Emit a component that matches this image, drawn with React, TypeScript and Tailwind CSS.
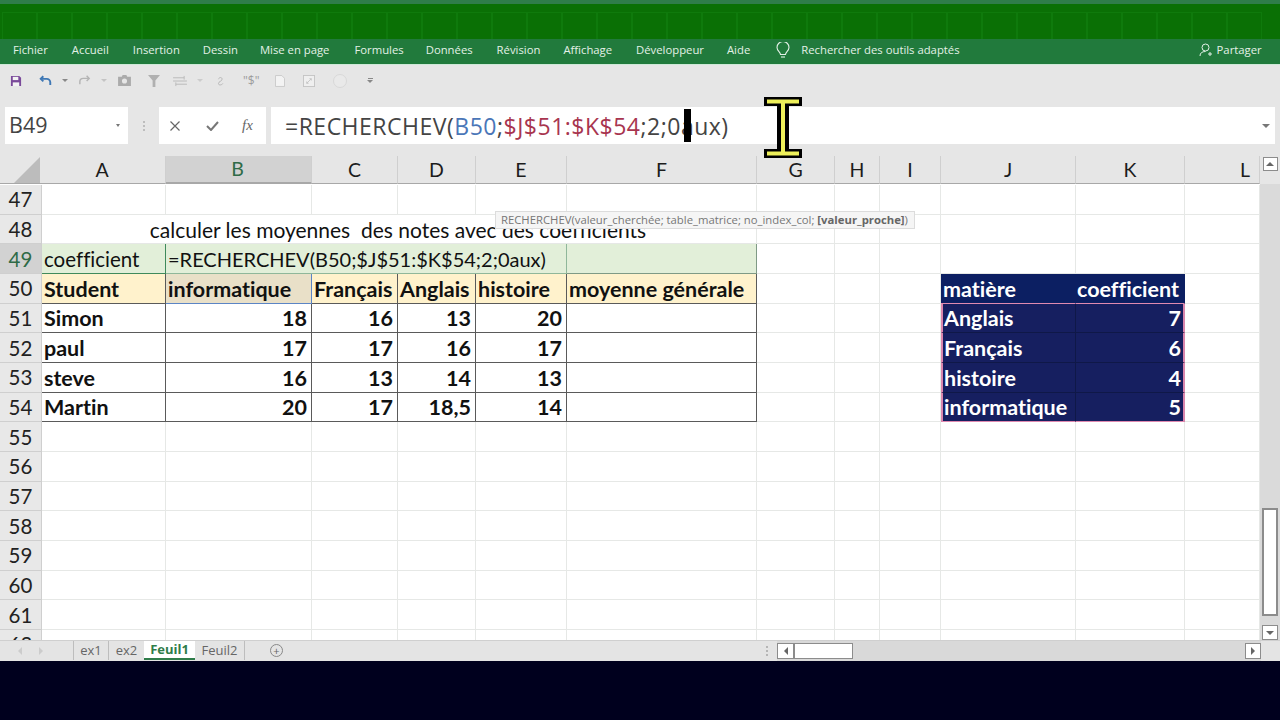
import React from "react";

const COLS = ["A", "B", "C", "D", "E", "F", "G", "H", "I", "J", "K", "L"];
const TABS = ["Fichier", "Accueil", "Insertion", "Dessin", "Mise en page", "Formules", "Données", "Révision", "Affichage", "Développeur", "Aide"];
const TAB_CLASS = ["ml-[13px]", "ml-[24px]", "ml-[24px]", "ml-[23px]", "ml-[22px]", "ml-[25px]", "ml-[22px]", "ml-[24px]", "ml-[23px]", "ml-[24px]", "ml-[23px]"];
const HEAD_CLASS = ["w-[124px] pr-[3px]", "w-[146px] pr-[2px]", "w-[86px]", "w-[78px]", "w-[91px]", "w-[190px]", "w-[78px]", "w-[45px]", "w-[61px]", "w-[135px]", "w-[109px]", "w-[75px] !justify-end pr-[9px]"];

const sans = "font-['Open_Sans',sans-serif]";
const cal = "font-['Lato',sans-serif] [font-variant-ligatures:none]";

function RowHead({ n, active }: { n: number; active?: boolean }) {
  return (
    <div className={`flex items-center justify-center border-r border-b border-[#cfcfcf] pt-[1px] text-[20.5px] ${cal} ${active ? "bg-[#d2d2d2] text-[#2f6b47]" : "bg-[#e8e8e8] text-[#222]"}`}>
      {n}
    </div>
  );
}

function Cell({ className = "", children }: { className?: string; children?: React.ReactNode }) {
  return <div className={`flex items-center overflow-hidden whitespace-nowrap border-r border-b pl-[2px] pr-[4px] pt-[1px] ${className}`}>{children}</div>;
}

const GRID = "border-[#e6e8e6]";
const DARK = "border-[#5a5a5a] font-bold text-[#111] text-[21.5px]";
const NAVY = "bg-[#161f60] border-[#0f1848] text-white font-bold text-[21.5px]";
const NAVYH = "bg-[#0c1f62] border-[#0c1f62] text-white font-bold text-[21.5px]";

function Empty({ count }: { count: number }) {
  return (
    <>
      {Array.from({ length: count }, (_, i) => (
        <Cell key={i} className={GRID} />
      ))}
    </>
  );
}

function Caret({ className = "" }: { className?: string }) {
  return <span className={`h-0 w-0 shrink-0 border-x-[3px] border-t-[3px] border-x-transparent ${className}`} />;
}

function Qat() {
  return (
    <div className="flex h-[42px] items-center pb-[11px] pl-0">
      <svg width="12" height="12" viewBox="0 0 13 13" className="ml-[10px] shrink-0">
        <path d="M1 1h9l2 2v9H1z" fill="#7a4a9a" />
        <rect x="3" y="2" width="6" height="3.500" fill="#f2f2f2" />
        <rect x="3" y="8" width="7" height="4" fill="#f2f2f2" />
      </svg>
      <svg width="13" height="12" viewBox="0 0 15 13" className="ml-[17px] shrink-0" fill="none" stroke="#3f78b5" strokeWidth="2.200">
        <path d="M5 1 2 4l3 3" />
        <path d="M2 4h7a4 4 0 0 1 4 4v3" />
      </svg>
      <Caret className="ml-[10px] border-t-[#888]" />
      <svg width="13" height="11" viewBox="0 0 15 13" className="ml-[10px] shrink-0" fill="none" stroke="#b4b4b4" strokeWidth="1.700">
        <path d="m10 1 3 3-3 3" />
        <path d="M13 4H6a4 4 0 0 0-4 4v3" />
      </svg>
      <Caret className="ml-[10px] border-t-[#c4c4c4]" />
      <svg width="13" height="11" viewBox="0 0 14 12" className="ml-[11px] shrink-0">
        <path d="M0 2h4l1-2h4l1 2h4v10H0z" fill="#ababab" />
        <circle cx="7" cy="6.500" r="2.800" fill="#e6e6e6" />
      </svg>
      <svg width="12" height="12" viewBox="0 0 13 13" className="ml-[17px] shrink-0">
        <path d="M0 0h13L8 6v7H5V6z" fill="#b0b0b0" />
      </svg>
      <svg width="14" height="12" viewBox="0 0 15 13" className="ml-[13px] shrink-0" fill="none" stroke="#b9b9b9" strokeWidth="1">
        <path d="M0 3h12M0 6.500h15M3 10h12M12 1v4M3 8v4" />
      </svg>
      <Caret className="ml-[10px] border-t-[#cccccc]" />
      <svg width="8" height="12" viewBox="0 0 11 13" className="ml-[14px] shrink-0" fill="none" stroke="#b4b4b4" strokeWidth="1.300">
        <path d="M2 4c1-3 5-3 5 0s-5 3-5 6 5 2 6 0" />
      </svg>
      <span className={`ml-[18px] w-[14px] shrink-0 text-[12px] leading-none text-[#9c9c9c] ${sans}`}>"$"</span>
      <svg width="10" height="12" viewBox="0 0 11 13" className="ml-[18px] shrink-0" fill="#f3f3f3" stroke="#c8c8c8">
        <path d="M.5.500h7l3 3v9H.5z" />
      </svg>
      <svg width="12" height="12" viewBox="0 0 13 13" className="ml-[18px] shrink-0" fill="#efefef" stroke="#c4c4c4">
        <rect x=".5" y=".5" width="12" height="12" />
        <path d="M4 9l5-5M6 9H4V7M7 4h2v2" fill="none" />
      </svg>
      <span className="ml-[18px] h-[14px] w-[14px] shrink-0 rounded-full border border-[#d8d8d8] bg-[#e9e9e9]" />
      <span className="ml-[20px] flex shrink-0 flex-col items-center gap-[1px]">
        <span className="h-[1px] w-[5px] bg-[#888]" />
        <span className="h-0 w-0 border-x-[3px] border-t-[3px] border-x-transparent border-t-[#888]" />
      </span>
    </div>
  );
}

function FormulaBar() {
  return (
    <div className="flex h-[37px] items-stretch pl-[5px]">
      <div className={`flex w-[123px] items-center justify-between bg-white pl-[4px] pr-[8px] text-[21.5px] text-[#444] ${sans}`}>
        <span>B49</span>
        <span className="h-0 w-0 border-x-[2px] border-t-[3px] border-x-transparent border-t-[#777]" />
      </div>
      <div className="flex w-[31px] flex-col items-center justify-center gap-[2px]">
        <span className="h-[2px] w-[2px] bg-[#bdbdbd]" />
        <span className="h-[2px] w-[2px] bg-[#bdbdbd]" />
        <span className="h-[2px] w-[2px] bg-[#bdbdbd]" />
      </div>
      <div className="flex w-[107px] items-center bg-white pl-[11px]">
        <svg width="10" height="10" viewBox="0 0 10 10" stroke="#666" strokeWidth="1.200">
          <path d="M.5.500l9 9M9.500.500l-9 9" />
        </svg>
        <svg width="13" height="10" viewBox="0 0 13 10" className="ml-[26px]" fill="none" stroke="#777" strokeWidth="2">
          <path d="m1 5 4 4 7-8" />
        </svg>
        <span className="ml-[23px] font-['Liberation_Serif',serif] text-[15px] italic text-[#666]">fx</span>
      </div>
      <div className={`ml-[5px] flex w-[1004px] items-center justify-between bg-white pl-[14px] pr-[5px] pt-[1px] text-[23px] tracking-[0.5px] text-[#444] ${sans}`}>
        <span className="whitespace-nowrap">
          =RECHERCHEV(<span className="text-[#4a76b8]">B50</span>;<span className="text-[#a8354f]">$J$51:$K$54</span>;2;0
          <span className="relative">
            a
            <span className="absolute left-[3px] top-[-1px] h-[33px] w-[7px] bg-black" />
          </span>
          ux)
        </span>
        <span className="h-0 w-0 border-x-[4px] border-t-[4px] border-x-transparent border-t-[#777]" />
      </div>
    </div>
  );
}

function ColHeaders() {
  return (
    <div className="flex h-[28px] items-stretch">
      <div className="flex w-[42px] items-end justify-end border-b border-[#a8a8a8] bg-[#e6e6e6] pr-[2px] pb-[0px]">
        <span className="h-0 w-0 border-b-[26px] border-l-[26px] border-b-[#bcbcbc] border-l-transparent" />
      </div>
      {COLS.map((c, i) => (
        <div
          key={c}
          className={`${HEAD_CLASS[i]} flex items-center justify-center border-b border-r border-[#cfcfcf] border-b-[#a8a8a8] text-[19.5px] ${cal} ${c === "B" ? "border-b-2 border-b-[#2f7d4a] bg-[#d2d2d2] text-[#2f6b47]" : "bg-[#e6e6e6] text-[#1c1c1c]"}`}
        >
          {c}
        </div>
      ))}
    </div>
  );
}

function Sheet() {
  const students: [string, string, string, string, string, string, string][] = [
    ["51", "Simon", "18", "16", "13", "20", "Anglais|7"],
    ["52", "paul", "17", "17", "16", "17", "Français|6"],
    ["53", "steve", "16", "13", "14", "13", "histoire|4"],
    ["54", "Martin", "20", "17", "18,5", "14", "informatique|5"],
  ];
  return (
    <div className={`grid h-[456px] w-[1260px] grid-cols-[42px_124px_146px_86px_78px_91px_190px_78px_45px_61px_135px_109px_75px] auto-rows-[29.67px] overflow-hidden bg-white pt-[1px] ${cal} text-[20.5px] text-[#111]`}>
      <RowHead n={47} />
      <Empty count={12} />

      <RowHead n={48} />
      <Cell className={`col-span-6 justify-center text-[21px] ${GRID}`}>calculer les moyennes&nbsp; des notes avec des coefficients</Cell>
      <Empty count={6} />

      <RowHead n={49} active />
      <Cell className="border-[#3f8a5b] bg-[#e2efd9]">coefficient</Cell>
      <Cell className="col-span-4 border-[#8fb79a] bg-[#e2efd9] text-[20px]">=RECHERCHEV(B50;$J$51:$K$54;2;0aux)</Cell>
      <Cell className="border-[#7f9a86] bg-[#e2efd9]" />
      <Empty count={6} />

      <RowHead n={50} />
      <Cell className={`${DARK} bg-[#fff2cc]`}>Student</Cell>
      <Cell className={`${DARK} border-[#5b85c5] bg-[#e9e0c8]`}>informatique</Cell>
      <Cell className={`${DARK} bg-[#fff2cc]`}>Français</Cell>
      <Cell className={`${DARK} bg-[#fff2cc]`}>Anglais</Cell>
      <Cell className={`${DARK} bg-[#fff2cc]`}>histoire</Cell>
      <Cell className={`${DARK} bg-[#fff2cc]`}>moyenne générale</Cell>
      <Empty count={2} />
      <Cell className={GRID} />
      <Cell className={`${NAVYH} border-b-[#e08ab0]`}>matière</Cell>
      <Cell className={`${NAVYH} justify-end border-b-[#e08ab0] !pr-[5px]`}>coefficient</Cell>
      <Cell className={GRID} />

      {students.map((s) => {
        const [name, coef] = s[6].split("|");
        const last = s[0] === "54";
        return (
          <React.Fragment key={s[0]}>
            <RowHead n={Number(s[0])} />
            <Cell className={DARK}>{s[1]}</Cell>
            <Cell className={`${DARK} justify-end`}>{s[2]}</Cell>
            <Cell className={`${DARK} justify-end`}>{s[3]}</Cell>
            <Cell className={`${DARK} justify-end`}>{s[4]}</Cell>
            <Cell className={`${DARK} justify-end`}>{s[5]}</Cell>
            <Cell className={DARK} />
            <Empty count={2} />
            <Cell className={GRID} />
            <Cell className={`${NAVY} border-l-2 border-l-[#d986ad] !pl-[1px] ${last ? "border-b-[#e08ab0]" : ""}`}>{name}</Cell>
            <Cell className={`${NAVY} justify-end border-r-2 border-r-[#d986ad] !pr-[2px] ${last ? "border-b-[#e08ab0]" : ""}`}>{coef}</Cell>
            <Cell className={GRID} />
          </React.Fragment>
        );
      })}

      {[55, 56, 57, 58, 59, 60, 61, 62].map((n) => (
        <React.Fragment key={n}>
          <RowHead n={n} />
          <Empty count={12} />
        </React.Fragment>
      ))}
    </div>
  );
}

function VScroll() {
  return (
    <div className="flex h-[456px] w-[20px] flex-col items-center bg-[#dadada]">
      <div className="h-[324px]" />
      <div className="h-[108px] w-[16px] border-2 border-[#8c8c8c] bg-white" />
      <div className="h-[9px]" />
      <div className="flex h-[15px] w-[16px] items-center justify-center border border-[#8c8c8c] bg-white">
        <span className="h-0 w-0 border-x-[4px] border-t-[4px] border-x-transparent border-t-[#666]" />
      </div>
    </div>
  );
}

function Bottom() {
  return (
    <div className={`flex h-[21px] items-stretch border-t border-[#cfcfcf] bg-[#e4e4e4] pb-[1px] text-[13px] text-[#666] ${sans}`}>
      <div className="flex w-[73px] items-center pl-[18px]">
        <span className="h-0 w-0 border-y-[4px] border-r-[4px] border-y-transparent border-r-[#ccc]" />
        <span className="ml-[17px] h-0 w-0 border-y-[4px] border-l-[4px] border-y-transparent border-l-[#ccc]" />
      </div>
      <div className="flex w-[35px] items-center justify-center border-l border-[#bdbdbd]">ex1</div>
      <div className="flex w-[36px] items-center justify-center border-l border-[#bdbdbd]">ex2</div>
      <div className="flex w-[51px] items-center justify-center border-b-2 border-[#2f7d4a] bg-white font-bold text-[#2f7d4a]">Feuil1</div>
      <div className="flex w-[50px] items-center justify-center border-r border-[#bdbdbd]">Feuil2</div>
      <div className="ml-[25px] mt-[3px] flex h-[13px] w-[13px] items-center justify-center rounded-full border border-[#888] text-[11px] leading-none">+</div>
      <div className="ml-[483px] flex w-[2px] flex-col justify-center gap-[2px]">
        <span className="h-[2px] w-[2px] bg-[#b5b5b5]" />
        <span className="h-[2px] w-[2px] bg-[#b5b5b5]" />
        <span className="h-[2px] w-[2px] bg-[#b5b5b5]" />
      </div>
      <div className="ml-[9px] flex h-[20px] w-[484px] bg-[#d9d9d9] py-[2px]">
        <div className="flex w-[17px] items-center justify-center border border-[#8c8c8c] bg-white">
          <span className="h-0 w-0 border-y-[4px] border-r-[4px] border-y-transparent border-r-[#666]" />
        </div>
        <div className="w-[59px] border border-[#8c8c8c] bg-white" />
        <div className="flex-1" />
        <div className="flex w-[16px] items-center justify-center border border-[#8c8c8c] bg-white">
          <span className="h-0 w-0 border-y-[4px] border-l-[4px] border-y-transparent border-l-[#666]" />
        </div>
      </div>
    </div>
  );
}

export default function App() {
  return (
    <div className="relative h-[720px] w-[1280px] overflow-hidden bg-[#00001e]">
      <div className="h-[4px] bg-[#2f7d4a]" />
      <div className="flex h-[35px] bg-[#0a7005] pl-[2px] pt-[8px]">
        {Array.from({ length: 36 }, (_, i) => (
          <div key={i} className="h-[27px] w-[35px] shrink-0 border-x border-t border-[#0f7a0c]" />
        ))}
      </div>
      <div className={`flex h-[25px] items-center whitespace-nowrap bg-[#217a3c] pb-[3px] text-[11.3px] text-[#e3f1e7] ${sans}`}>
        {TABS.map((t, i) => (
          <span key={t} className={`${TAB_CLASS[i]} shrink-0`}>{t}</span>
        ))}
        <svg width="14" height="17" viewBox="0 0 14 17" className="ml-[26px] shrink-0" fill="none" stroke="#e3f1e7" strokeWidth="1.100">
          <path d="M4.500 12.500C4.500 10 1 9 1 5.500a6 6 0 0 1 12 0c0 3.500-3.500 4.500-3.500 7z" />
          <path d="M5 15h4" />
        </svg>
        <span className="ml-[11px] shrink-0">Rechercher des outils adaptés</span>
        <svg width="13" height="14" viewBox="0 0 13 14" className="ml-[239px] shrink-0" fill="none" stroke="#e3f1e7" strokeWidth="1">
          <circle cx="6.500" cy="4.500" r="3.500" />
          <path d="M1 13c0-3 2-4.500 5.500-4.500M9 11h4M11 9v4" />
        </svg>
        <span className="ml-[5px] shrink-0">Partager</span>
      </div>
      <div className="h-[1px] bg-[#cfe9d8]" />
      <div className="bg-[#e6e6e6]">
        <Qat />
        <FormulaBar />
        <div className="h-[12px]" />
        <div className="flex">
          <ColHeaders />
          <div className="flex w-[20px] items-start justify-center bg-[#e6e6e6] pt-[1px]">
            <div className="flex h-[14px] w-[15px] items-center justify-center border border-[#8c8c8c] bg-white">
              <span className="h-0 w-0 border-x-[4px] border-b-[4px] border-x-transparent border-b-[#666]" />
            </div>
          </div>
        </div>
      </div>
      <div className="flex">
        <Sheet />
        <VScroll />
      </div>
      <Bottom />

      <div className={`absolute left-[495px] top-[211px] flex h-[18px] w-[420px] items-center whitespace-nowrap border border-[#dcdcdc] bg-[#f5f5f5] pl-[5px] text-[11.3px] text-[#777] ${sans}`}>
        RECHERCHEV(valeur_cherchée; table_matrice; no_index_col;&nbsp;<b className="text-[#666]">[valeur_proche]</b>)
      </div>

      <svg width="40" height="63" viewBox="0 0 40 63" className="absolute left-[763px] top-[96px]">
        <path d="M1 1h38v9H26v43h13v9H1v-9h13V10H1z" fill="#000" />
        <path d="M4 3.500h32v4H22v48h14v4H4v-4h14V7.500H4z" fill="#eef05a" />
      </svg>
    </div>
  );
}
